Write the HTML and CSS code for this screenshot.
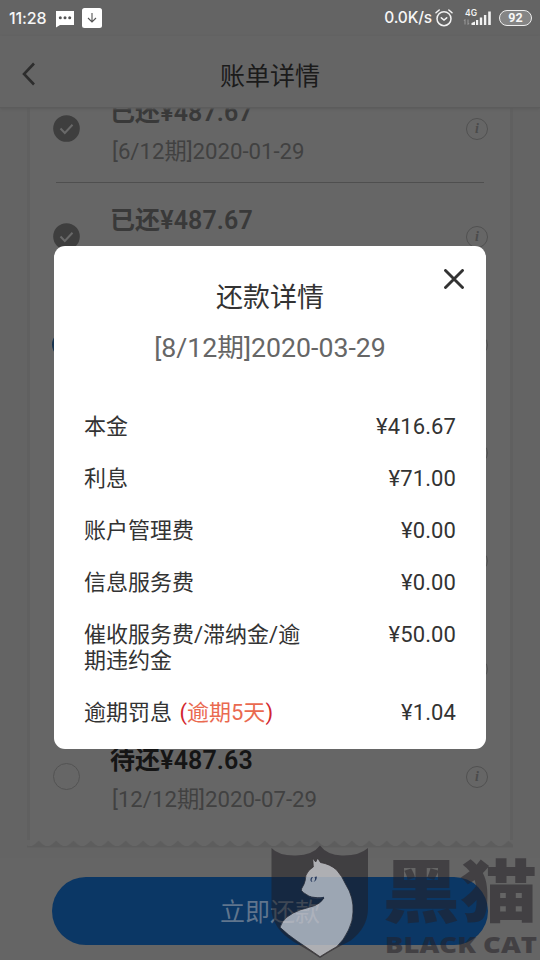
FILE: index.html
```html
<!DOCTYPE html>
<html lang="zh-CN">
<head>
<meta charset="utf-8">
<title>账单详情</title>
<link rel="stylesheet" href="styles.css">
</head>
<body>
<div class="screen">
  <header class="status">
    <span class="clock">11:28</span>
    <svg class="chat" width="18" height="17" viewBox="0 0 18 17"><path d="M0 0H18V14H4L0 16.5Z" fill="#fff"/><g fill="#555"><circle cx="4.3" cy="6.8" r="1.5"/><circle cx="9" cy="6.8" r="1.5"/><circle cx="13.7" cy="6.8" r="1.5"/></g></svg>
    <svg class="down" width="20" height="20" viewBox="0 0 20 20"><rect width="20" height="20" rx="2.5" fill="#fff"/><path d="M10 5V14M6 10L10 14L14 10" fill="none" stroke="#555" stroke-width="1.1"/></svg>
    <span class="speed">0.0K/s</span>
    <svg class="alarm" width="18" height="18" viewBox="0 0 18 18" fill="none" stroke="#f2f2f2" stroke-width="1.5" stroke-linecap="round"><circle cx="9" cy="9.7" r="7"/><path d="M1 3.8L4.2 1M17 3.8L13.8 1M6.3 8.8L9 11L11.7 8.8"/></svg>
    <svg class="signal" width="30" height="18" viewBox="0 0 30 18"><text class="net" x="2" y="7.4">4G</text><g fill="#f2f2f2"><path d="M8.500 16V14L12 12.500V16ZM13 11H15.200V16H13ZM16.800 8.500H19.200V16H16.800ZM20.900 6H23.300V16H20.900ZM25.200 2.500H27.800V16H25.200Z"/></g><path d="M2 15.5V10.5M1 12L2 10.5M5 10.5V15.5M5 15.5L6 14" stroke="#999" fill="none"/></svg>
    <span class="battery">92</span>
  </header>
  <nav class="nav">
    <svg class="back" width="16" height="24" viewBox="0 0 16 24"><path d="M13 1.5L3 12L13 22.5" fill="none" stroke="#2d2d2d" stroke-width="2.6"/></svg>
    <h1>账单详情</h1>
  </nav>
  <main class="list">
    <div class="card">
      <div class="row">
        <svg class="mark" viewBox="0 0 27 27"><circle cx="13.5" cy="13.5" r="13.3" fill="#3e3e3e"/><path d="M7.5 13.5L11.8 18L19.5 9.7" fill="none" stroke="#696969" stroke-width="2"/></svg>
        <div class="info"><b>已还¥487.67</b><span>[6/12期]2020-01-29</span></div>
        <i class="tip">i</i>
      </div>
      <div class="row">
        <svg class="mark" viewBox="0 0 27 27"><circle cx="13.5" cy="13.5" r="13.3" fill="#3e3e3e"/><path d="M7.5 13.5L11.8 18L19.5 9.7" fill="none" stroke="#696969" stroke-width="2"/></svg>
        <div class="info"><b>已还¥487.67</b></div>
        <i class="tip">i</i>
      </div>
      <div class="row"><div class="mark current"></div><i class="tip"></i></div>
      <div class="row"><div class="mark"></div><i class="tip"></i></div>
      <div class="row"><div class="mark"></div><i class="tip"></i></div>
      <div class="row"><div class="mark"></div><i class="tip"></i></div>
      <div class="row due">
        <div class="mark ring"></div>
        <div class="info"><b>待还¥487.63</b><span>[12/12期]2020-07-29</span></div>
        <i class="tip">i</i>
      </div>
    </div>
    <svg class="edge" width="486" height="9" viewBox="0 0 486 9"><defs><pattern id="wave" x="3" width="17.4" height="9" patternUnits="userSpaceOnUse"><path d="M0 6L1.500 6Q3.500 5.500 8.700 0.500Q13.900 5.500 15.900 6L17.400 6V7.500H0Z" fill="#5d5d5d"/></pattern></defs><rect x="3" width="480" height="6" fill="#666"/><rect width="486" height="8" fill="url(#wave)"/></svg>
  </main>
  <footer class="foot"><button class="pay">立即还款</button></footer>

  <section class="modal">
    <svg class="close" width="20" height="20" viewBox="0 0 20 20"><path d="M1.5 1.5L18.5 18.5M18.5 1.5L1.5 18.5" stroke="#333" stroke-width="2.9" stroke-linecap="round"/></svg>
    <h2>还款详情</h2>
    <p class="term">[8/12期]2020-03-29</p>
    <dl class="fees">
      <div><dt>本金</dt><dd>¥416.67</dd></div>
      <div><dt>利息</dt><dd>¥71.00</dd></div>
      <div><dt>账户管理费</dt><dd>¥0.00</dd></div>
      <div><dt>信息服务费</dt><dd>¥0.00</dd></div>
      <div><dt>催收服务费/滞纳金/逾期违约金</dt><dd>¥50.00</dd></div>
      <div><dt>逾期罚息 <span class="late">(<em>逾期5天</em>)</span></dt><dd>¥1.04</dd></div>
    </dl>
  </section>

  <svg class="brand" width="280" height="130" viewBox="0 0 280 130">
    <path d="M11.500 18Q19 26 36 25.500Q53 25 60 15.500Q67 25 82 25.500Q99 26 108 18V78Q108 98 90 111Q72 120 60 128Q50 121 34 112Q11.500 98 11.500 78Z" fill="#211d22" opacity=".55"/>
    <path d="M52.700 28L55.700 32L57.700 28L60.500 32.500Q70 34 76.700 40Q82 46 85.500 54Q90 61 91.700 68Q93.500 75 93 82Q93 91 88.500 100Q84 110 76.700 116.700Q69 121 60 126.700Q46 117 37 111Q28 105 20 97.300Q22 91 27 87Q33 82.500 40 80L55 75.500Q61 73 64 68Q57 68 51.500 67Q49 66.500 46.500 64.500Q42.500 62.500 41.500 60.500Q41.300 58.500 42.500 57Q44.500 54 45.300 50Q45 45 48.500 41Q51 38.500 53.300 37Z" fill="#eef0f7" opacity=".66" stroke="#302c2d" stroke-width=".8"/>
    <path d="M50.500 49Q51 46.500 53 47Q50.500 50 52.500 52Q50 51.500 50.500 49ZM54.500 47L57 46.500Q56.500 51 53.500 52Q56 49.500 54.500 47Z" fill="#2b3c5e"/>
    <path d="M49 66.500Q55 70 64 67.500" fill="none" stroke="#26334b" stroke-width="1.4"/>
    <text class="brand-cn" transform="translate(122.500 86.800) scale(1.075 .95)">黑猫</text>
    <text class="brand-en" x="125" y="122.500" textLength="152" lengthAdjust="spacingAndGlyphs">BLACK CAT</text>
  </svg>
</div>
</body>
</html>
```

FILE: styles.css
```css
* { box-sizing: border-box; }
body { margin: 0; font-family: Roboto, "Noto Sans CJK SC", sans-serif; }
h1, h2, p, dl, dd { margin: 0; font-weight: 400; }

.screen {
  position: relative;
  width: 540px;
  height: 960px;
  overflow: hidden;
  display: flex;
  flex-direction: column;
  background: #646464;
}

.status {
  height: 36px;
  display: flex;
  align-items: center;
  padding: 0 8px 0 9px;
  color: #f6f6f6;
  background: #646464;
}
.clock { width: 47px; font: 500 16px/36px Inter, sans-serif; letter-spacing: -.1px; white-space: nowrap; }
.chat { margin-top: 2px; }
.down { margin-left: 8px; margin-top: -1px; }
.speed { margin-left: auto; width: 48px; font: 500 15.500px/36px Inter, sans-serif; letter-spacing: -.15px; display: flex; justify-content: flex-end; white-space: nowrap; }
.alarm { margin-left: 3px; margin-top: -1px; }
.signal { margin-left: 10px; }
.net { font: 600 8.500px Inter, sans-serif; fill: #f2f2f2; }
.battery {
  width: 33px;
  height: 16px;
  margin-left: 6px;
  border: 1.500px solid #eee;
  border-radius: 8px;
  background: #858585;
  font: 700 12.500px/14px Roboto, sans-serif;
  text-align: center;
}

.nav {
  position: relative;
  z-index: 1;
  height: 72px;
  display: flex;
  align-items: center;
  justify-content: center;
  background: #656565;
  border-bottom: 1px solid #5c5c5c;
  box-shadow: 0 1px 2px #5c5c5c;
}
.nav h1 { padding-top: 11px; font-size: 25px; line-height: 36px; color: #1b1b1b; }
.back { position: absolute; left: 21px; top: 26px; }

.list { height: 750px; flex: none; overflow: hidden; padding: 0 27px; }
.card {
  height: 732px;
  padding: 0 23px;
  border: solid #606060;
  border-width: 0 3px;
  background: #666;
  display: flex;
  flex-direction: column;
}
.row {
  flex: none;
  height: 108px;
  display: flex;
  align-items: center;
  border-bottom: 1px solid #4f4f4f;
  margin: 0 3px;
}
.row:first-child { margin-top: -33px; }
.row:last-child { border: 0; height: 107px; }
.mark { width: 27px; height: 27px; flex: none; margin-left: -3.500px; }
.ring, .current { border: 1.500px solid #535353; border-radius: 50%; }
.current { border: 2px solid #173450; margin-left: -4px; }
.info {
  align-self: flex-start;
  margin-left: 30.500px;
  padding-top: 21px;
  display: flex;
  flex-direction: column;
  color: #393939;
}
.info b { font-size: 25px; line-height: 34px; font-weight: 600; letter-spacing: .1px; }
.info span { padding-left: 2px; margin-top: 3.500px; font-size: 22.200px; line-height: 34px; color: #414141; }
.due .info b { color: #151515; }
.tip {
  width: 22px;
  height: 22px;
  margin: 0 -4px 0 auto;
  border: 1.500px solid #515151;
  border-radius: 50%;
  color: #4b4b4b;
  font: italic 700 14px/19px "Liberation Serif", serif;
  text-align: center;
}
.edge { display: block; }

.foot { height: 102px; padding: 19px 52px 0; background: #656565; }
.pay {
  display: block;
  width: 436px;
  height: 68px;
  border: 0;
  border-radius: 34px;
  background: #0b3765;
  color: #60758d;
  font: 400 25px/68px Roboto, "Noto Sans CJK SC", sans-serif;
  padding: 2px 0 0;
}

.modal {
  position: absolute;
  z-index: 2;
  left: 54px;
  top: 246px;
  width: 432px;
  height: 503px;
  padding: 33px 30px 0;
  border-radius: 11px;
  background: #fff;
  color: #333;
  text-align: center;
}
.close { position: absolute; right: 22px; top: 23px; }
.modal h2 { font-size: 27px; line-height: 38px; }
.term { margin-top: 12px; font-size: 26.700px; line-height: 38px; color: #666; }
.fees { margin-top: 47px; display: flex; flex-direction: column; gap: 26px; font-size: 22px; line-height: 26px; text-align: left; }
.fees div { display: flex; justify-content: space-between; }
.fees dt { width: 221px; }
.fees dd { letter-spacing: .1px; }
.late { color: #d22630; margin-left: 2px; white-space: nowrap; }
.late em { font-style: normal; color: #ea6a50; }

.brand { position: absolute; z-index: 3; left: 260px; top: 830px; opacity: .95; }
.brand-cn { font: 900 72px "Noto Sans CJK SC", sans-serif; fill: #252127; opacity: .55; }
.brand-en { font: 800 22px "Open Sans", sans-serif; fill: #252127; opacity: .55; }
```
